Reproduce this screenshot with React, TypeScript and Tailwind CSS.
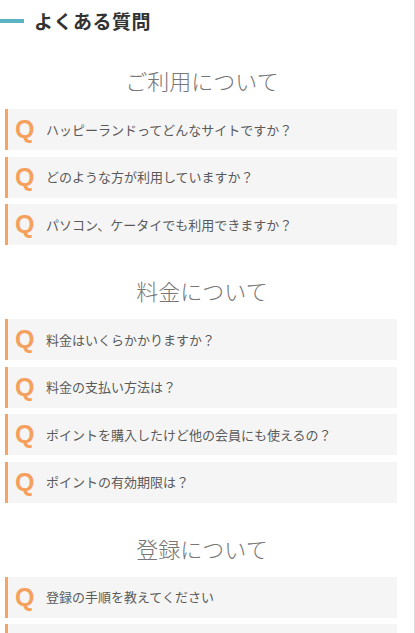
const font = "font-['Noto_Sans_CJK_JP','Noto_Sans',sans-serif]";

type Section = {
  title: string;
  items: string[];
  first?: boolean;
};

const sections: Section[] = [
  {
    title: "ご利用について",
    first: true,
    items: [
      "ハッピーランドってどんなサイトですか？",
      "どのような方が利用していますか？",
      "パソコン、ケータイでも利用できますか？",
    ],
  },
  {
    title: "料金について",
    items: [
      "料金はいくらかかりますか？",
      "料金の支払い方法は？",
      "ポイントを購入したけど他の会員にも使えるの？",
      "ポイントの有効期限は？",
    ],
  },
  {
    title: "登録について",
    items: ["登録の手順を教えてください", "ログインできない場合は？"],
  },
];

const QuestionRow = ({ text }: { text: string }) => {
  return (
    <div className="flex items-center h-[41px] bg-[#f5f5f5] border-l-[3px] border-[#f6a464] shrink-0">
      <span className="w-[38px] pl-[7px] text-[25px] font-bold leading-none text-[#f6a05e] font-['Liberation_Sans',sans-serif]">
        Q
      </span>
      <span className="text-[13px] text-[#5a5a5a]">{text}</span>
    </div>
  );
};

const App = () => {
  return (
    <div className={`w-[415px] h-[633px] overflow-hidden bg-white border-r border-[#dcdcdc] ${font}`}>
      <div className="flex items-center h-[42px] gap-[10px]">
        <div className="w-[24px] h-[4px] bg-[#5bb3c4]" />
        <h1 className="text-[19px] font-bold text-[#333] tracking-[0.5px]">よくある質問</h1>
      </div>

      {sections.map((section) => (
        <div key={section.title} className={section.first ? "mt-[23px]" : "mt-[30px]"}>
          <h2 className="h-[30px] leading-[30px] text-center text-[22px] text-[#777] font-light pr-[10px] mb-[14px]">
            {section.title}
          </h2>
          <div className="flex flex-col gap-[6.5px] pl-[5px] pr-[17px]">
            {section.items.map((q) => (
              <QuestionRow key={q} text={q} />
            ))}
          </div>
        </div>
      ))}
    </div>
  );
};

export default App;
